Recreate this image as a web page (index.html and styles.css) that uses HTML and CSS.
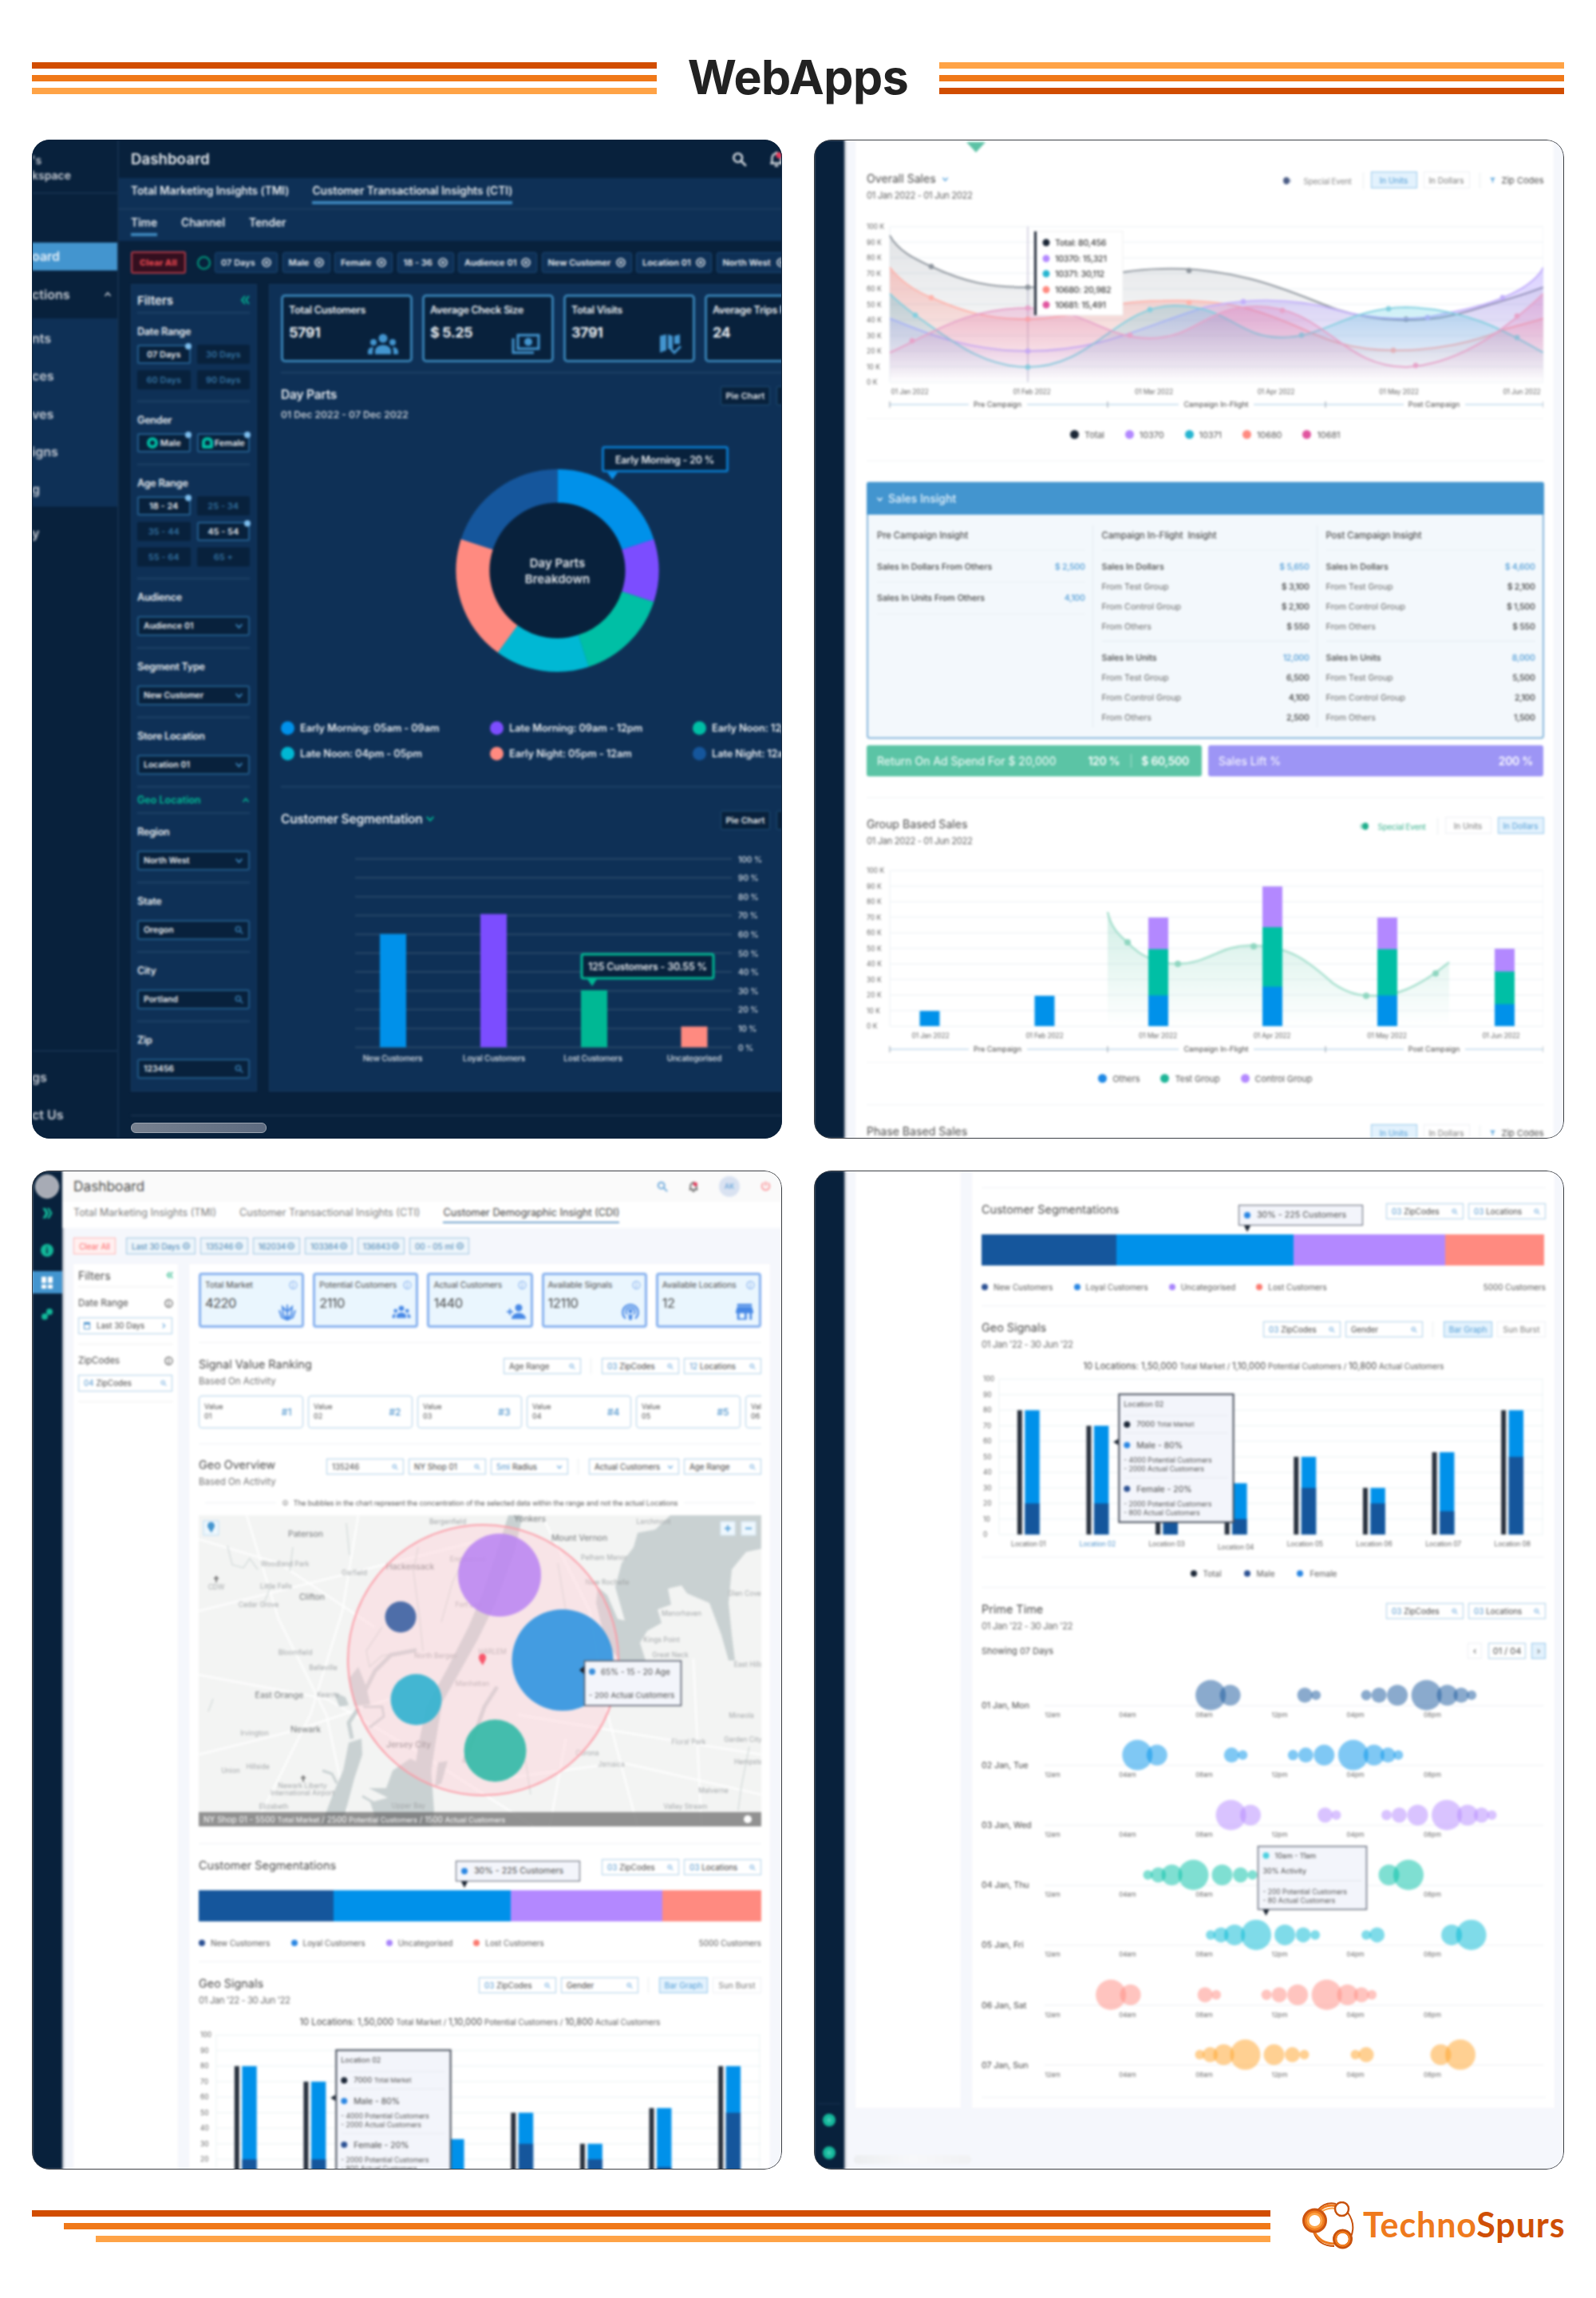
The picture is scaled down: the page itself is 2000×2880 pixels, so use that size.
FILE: index.html
```html
<!DOCTYPE html>
<html lang="en">
<head>
    <meta charset="UTF-8">
    <meta name="viewport" content="width=device-width, initial-scale=1.0">
    <title>WebApps - TechnoSpurs</title>
    <link rel="stylesheet" href="styles.css">
</head>
<body>
    <!-- icons -->
    <svg class="defs" width="0" height="0">
        <symbol id="i-search" viewBox="0 0 16 16"><circle cx="6.5" cy="6.5" r="4.5" fill="none" stroke="currentColor" stroke-width="2"/><path d="M10 10l5 5" stroke="currentColor" stroke-width="2"/></symbol>
        <symbol id="i-down" viewBox="0 0 10 10"><path d="M1.5 3L5 7l3.500-4" fill="none" stroke="currentColor" stroke-width="1.600"/></symbol>
        <symbol id="i-up" viewBox="0 0 10 10"><path d="M1.500 7L5 3l3.500 4" fill="none" stroke="currentColor" stroke-width="1.600"/></symbol>
        <symbol id="i-right" viewBox="0 0 10 10"><path d="M3.500 1.500L7 5l-3.500 3.500" fill="none" stroke="currentColor" stroke-width="1.400"/></symbol>
        <symbol id="i-dleft" viewBox="0 0 12 12"><path d="M6 1L2 6l4 5M11 1L7 6l4 5" fill="none" stroke="currentColor" stroke-width="2"/></symbol>
        <symbol id="i-dright" viewBox="0 0 16 16"><path d="M2 1h4l4 7-4 7H2l4-7zM8 1h3l4 7-4 7H8l4-7z" fill="currentColor"/></symbol>
        <symbol id="i-x" viewBox="0 0 12 12"><circle cx="6" cy="6" r="5" fill="none" stroke="currentColor" stroke-width="1.600"/><path d="M4 4l4 4M8 4l-4 4" stroke="currentColor" stroke-width="1.300"/></symbol>
        <symbol id="i-info" viewBox="0 0 12 12"><circle cx="6" cy="6" r="5" fill="none" stroke="currentColor" stroke-width="1.200"/><path d="M6 5v4M6 3v1" stroke="currentColor" stroke-width="1.200"/></symbol>
        <symbol id="i-bell" viewBox="0 0 16 18"><path d="M3 14V8a5 5 0 0 1 10 0v6zM1 14h14M8 1v2" fill="none" stroke="currentColor" stroke-width="2"/><path d="M6 16h4v2H6z" fill="currentColor"/><circle cx="11" cy="5" r="3.500" fill="#e5395a"/></symbol>
        <symbol id="i-power" viewBox="0 0 16 16"><path d="M5 3a6 6 0 1 0 6 0M8 1v7" fill="none" stroke="currentColor" stroke-width="1.800"/></symbol>
        <symbol id="i-group" viewBox="0 0 40 26"><circle cx="20" cy="6" r="5.500" fill="currentColor"/><circle cx="8" cy="11" r="4" fill="currentColor"/><circle cx="32" cy="11" r="4" fill="currentColor"/><path d="M10 26v-4c0-10 20-10 20 0v4zM1 26v-3c0-4 3-6 7-6-1 3-1 5-1 9zM39 26v-3c0-4-3-6-7-6 1 3 1 5 1 9z" fill="currentColor"/></symbol>
        <symbol id="i-cash" viewBox="0 0 36 26"><path d="M8 2h26v17H8zM2 6v18h26" fill="none" stroke="currentColor" stroke-width="3"/><circle cx="21" cy="10.500" r="5" fill="currentColor"/></symbol>
        <symbol id="i-map" viewBox="0 0 28 26"><path d="M1 3l8-2v20l-8 3zM11 1l6 2v18l-6-2zM19 3l7-2v12h-7z" fill="currentColor"/><path d="M15 20l4 4 8-8" stroke="currentColor" stroke-width="3" fill="none"/></symbol>
        <symbol id="i-lotus" viewBox="0 0 24 22"><path d="M12 2v18M6 5l1 10 5 5 5-5 1-10-6 6zM2 9l3 9 7 3 7-3 3-9" fill="none" stroke="currentColor" stroke-width="2"/></symbol>
        <symbol id="i-adduser" viewBox="0 0 24 20"><circle cx="15" cy="5" r="4.500" fill="currentColor"/><path d="M6 19c0-10 18-10 18 0zM0 9h8v2H0zM3 6h2v8H3z" fill="currentColor"/></symbol>
        <symbol id="i-signal" viewBox="0 0 26 26"><path d="M6 23a11.500 11.500 0 1 1 14 0M8 17a6.500 6.500 0 1 1 10 0" fill="none" stroke="currentColor" stroke-width="2.600"/><circle cx="13" cy="12" r="3" fill="currentColor"/><path d="M10 17h6l-1 8h-4z" fill="currentColor"/></symbol>
        <symbol id="i-store" viewBox="0 0 24 24"><path d="M2 1h20v3H2zM2 5h20l2 7v2H0v-2zM2 14h3v7h7v-7h3v9H2zM19 14h3v9h-3z" fill="currentColor"/></symbol>
        <symbol id="i-funnel" viewBox="0 0 10 10"><path d="M0 1h10L6 5.500V10H4V5.500z" fill="currentColor"/></symbol>
    </svg>

    <header class="page-head">
        <div class="lines"><i class="dark"></i><i class="mid"></i><i class="light"></i></div>
        <h1>WebApps</h1>
        <div class="lines"><i class="light"></i><i class="mid"></i><i class="dark"></i></div>
    </header>

    <main class="grid">
        <!-- 1: dark dashboard -->
        <section class="shot shot-dark">
            <div class="soft dk">
                <aside class="dk-side">
                    <div class="ws">'s<br>kspace</div>
                    <div class="dk-active">oard</div>
                    <div class="dk-group"><span>ctions</span><svg><use href="#i-up"/></svg></div>
                    <ul class="dk-sub"><li>nts</li><li>ces</li><li>ves</li><li>igns</li><li>g</li></ul>
                    <div class="dk-item">y</div>
                    <div class="dk-bottom"><div>gs</div><div>ct Us</div></div>
                </aside>
                <div class="dk-main">
                    <div class="dk-top"><h2>Dashboard</h2><svg class="ic-s"><use href="#i-search"/></svg><svg class="ic-b"><use href="#i-bell"/></svg></div>
                    <nav class="dk-tabs"><a>Total Marketing Insights (TMI)</a><a class="on">Customer Transactional Insights (CTI)</a></nav>
                    <nav class="dk-tabs sub"><a class="on">Time</a><a>Channel</a><a>Tender</a></nav>
                    <div class="dk-tags">
                        <b class="clear">Clear All</b><i class="ring"></i>
                        <span style="width:79px">07 Days<svg><use href="#i-x"/></svg></span>
                        <span style="width:60px">Male<svg><use href="#i-x"/></svg></span>
                        <span style="width:73px">Female<svg><use href="#i-x"/></svg></span>
                        <span style="width:71px">18 - 36<svg><use href="#i-x"/></svg></span>
                        <span style="width:99px">Audience 01<svg><use href="#i-x"/></svg></span>
                        <span style="width:113px">New Customer<svg><use href="#i-x"/></svg></span>
                        <span style="width:95px">Location 01<svg><use href="#i-x"/></svg></span>
                        <span style="width:95px">North West<svg><use href="#i-x"/></svg></span>
                    </div>
                    <div class="dk-body">
                        <div class="dk-filters">
                            <div class="f-head">Filters<svg><use href="#i-dleft"/></svg></div>
                            <div class="f-group"><label>Date Range</label>
                                <div class="btns"><b>07 Days</b><span>30 Days</span><span>60 Days</span><span>90 Days</span></div></div>
                            <div class="f-group"><label>Gender</label>
                                <div class="btns"><b><i class="gd"></i>Male</b><b><i class="gd sq"></i>Female</b></div></div>
                            <div class="f-group"><label>Age Range</label>
                                <div class="btns"><b>18 - 24</b><span>25 - 34</span><span>35 - 44</span><b>45 - 54</b><span>55 - 64</span><span>65 +</span></div></div>
                            <div class="f-group"><label>Audience</label><div class="inp">Audience 01<svg><use href="#i-down"/></svg></div></div>
                            <div class="f-group"><label>Segment Type</label><div class="inp">New Customer<svg><use href="#i-down"/></svg></div></div>
                            <div class="f-group"><label>Store Location</label><div class="inp">Location 01<svg><use href="#i-down"/></svg></div></div>
                            <div class="f-geo">Geo Location<svg><use href="#i-up"/></svg></div>
                            <div class="f-group"><label>Region</label><div class="inp">North West<svg><use href="#i-down"/></svg></div></div>
                            <div class="f-group"><label>State</label><div class="inp">Oregon<svg><use href="#i-search"/></svg></div></div>
                            <div class="f-group"><label>City</label><div class="inp">Portland<svg><use href="#i-search"/></svg></div></div>
                            <div class="f-group"><label>Zip</label><div class="inp">123456<svg><use href="#i-search"/></svg></div></div>
                        </div>
                        <div class="dk-panel">
                            <div class="dk-stats">
                                <div><h4>Total Customers</h4><b>5791</b><svg width="40" height="26"><use href="#i-group"/></svg></div>
                                <div><h4>Average Check Size</h4><b>$ 5.25</b><svg width="36" height="26"><use href="#i-cash"/></svg></div>
                                <div><h4>Total Visits</h4><b>3791</b><svg width="28" height="26"><use href="#i-map"/></svg></div>
                                <div><h4>Average Trips Per</h4><b>24</b></div>
                            </div>
                            <div class="dk-head"><div><h3>Day Parts</h3><p>01 Dec 2022 - 07 Dec 2022</p></div><span class="dk-btn">Pie Chart</span><span class="dk-btn next"></span></div>
                            <svg class="donut" width="640" height="325" viewBox="352 555 640 325">
                                <circle cx="698.500" cy="715" r="86" fill="#08213c"/>
                                <g id="donut" fill="none" stroke-width="42"></g>
                                <text class="dt" x="698.500" y="711">Day Parts</text>
                                <text class="dt" x="698.500" y="731">Breakdown</text>
                                <rect x="755.500" y="560.500" width="156" height="30" rx="2" fill="#08213c" stroke="#0a78c8" stroke-width="3"/>
                                <path d="M761 592h13l-6.500 9z" fill="#0a91ea"/>
                                <text class="tipt" x="833" y="581">Early Morning - 20 %</text>
                            </svg>
                            <div class="dk-legend">
                                <span><i style="background:#0091ea"></i>Early Morning: 05am - 09am</span>
                                <span><i style="background:#7c4dff"></i>Late Morning: 09am - 12pm</span>
                                <span><i style="background:#00bfa5"></i>Early Noon: 12pm - 04pm</span>
                                <span><i style="background:#00b8d4"></i>Late Noon: 04pm - 05pm</span>
                                <span><i style="background:#ff8a80"></i>Early Night: 05pm - 12am</span>
                                <span><i style="background:#15569c"></i>Late Night: 12am - 05am</span>
                            </div>
                            <div class="dk-head seg"><div><h3>Customer Segmentation <svg><use href="#i-down"/></svg></h3></div><span class="dk-btn">Pie Chart</span><span class="dk-btn next"></span></div>
                            <svg class="dkbars" width="640" height="290" viewBox="352 1060 640 290">
                                <g id="dk-axis"></g>
                                <rect x="476" y="1170.500" width="33" height="142" fill="#0091ea"/>
                                <rect x="602" y="1145.500" width="33" height="167" fill="#7c4dff"/>
                                <rect x="728" y="1241" width="33" height="71.500" fill="#00b894"/>
                                <rect x="853.500" y="1286.500" width="33" height="26" fill="#ff8a80"/>
                                <g class="ax mid"><text x="492" y="1330">New Customers</text><text x="619" y="1330">Loyal Customers</text><text x="743" y="1330">Lost Customers</text><text x="870" y="1330">Uncategorised</text></g>
                                <rect x="729" y="1196" width="165" height="30" rx="2" fill="#08213c" stroke="#00b894" stroke-width="3"/>
                                <path d="M736 1227h12l-6 9z" fill="#00b894"/>
                                <text class="tipt" x="811.500" y="1216">125 Customers - 30.55 %</text>
                            </svg>
                        </div>
                    </div>
                    <div class="dk-foot"></div>
                </div>
            </div>
            <i class="thumb"></i>
        </section>

        <!-- 2: sales -->
        <section class="shot">
            <div class="soft lt">
                <aside class="rail"></aside>
                <div class="card sales">
                    <i class="notch"></i>
                    <div class="sec first">
                        <div class="head"><div><h3>Overall Sales <svg><use href="#i-down"/></svg></h3><p>01 Jan 2022 - 01 Jun 2022</p></div>
                            <div class="tools"><span class="tog"><i></i>Special Event</span><span class="bt on">In Units</span><span class="bt">In Dollars</span><span class="zip"><svg><use href="#i-funnel"/></svg>Zip Codes</span></div></div>
                        <svg class="chart" width="848" height="268" viewBox="1086 256 848 268">
                            <defs>
                                <linearGradient id="gT" x1="0" y1="0" x2="0" y2="1"><stop offset="0" stop-color="#4a5565" stop-opacity=".16"/><stop offset="1" stop-color="#4a5565" stop-opacity="0"/></linearGradient>
                                <linearGradient id="gS" x1="0" y1="0" x2="0" y2="1"><stop offset="0" stop-color="#ff8a80" stop-opacity=".4"/><stop offset="1" stop-color="#ff8a80" stop-opacity="0"/></linearGradient>
                                <linearGradient id="gP" x1="0" y1="0" x2="0" y2="1"><stop offset="0" stop-color="#9f85ff" stop-opacity=".38"/><stop offset="1" stop-color="#9f85ff" stop-opacity="0"/></linearGradient>
                                <linearGradient id="gC" x1="0" y1="0" x2="0" y2="1"><stop offset="0" stop-color="#3fc3dd" stop-opacity=".3"/><stop offset="1" stop-color="#3fc3dd" stop-opacity="0"/></linearGradient>
                                <linearGradient id="gK" x1="0" y1="0" x2="0" y2="1"><stop offset="0" stop-color="#e060a8" stop-opacity=".3"/><stop offset="1" stop-color="#e060a8" stop-opacity="0"/></linearGradient>
                                <linearGradient id="gG" x1="0" y1="0" x2="0" y2="1"><stop offset="0" stop-color="#5bc4a5" stop-opacity=".28"/><stop offset="1" stop-color="#5bc4a5" stop-opacity="0"/></linearGradient>
                            </defs>
                            <g id="sales-axis"></g>
                            <g id="sales-lines"></g>
                            <rect x="1296" y="290" width="111" height="105" fill="#fff" stroke="#eee"/>
                            <path d="M1297.500 290v105" stroke="#222b3a" stroke-width="3"/>
                            <g class="lt-tip">
                                <circle cx="1311" cy="304" r="4.500" fill="#1b2636"/><text x="1322" y="308">Total: 80,456</text>
                                <circle cx="1311" cy="324" r="4.500" fill="#b388ff"/><text x="1322" y="328">10370: 15,321</text>
                                <circle cx="1311" cy="343" r="4.500" fill="#26b5d0"/><text x="1322" y="347">10371: 30,112</text>
                                <circle cx="1311" cy="363" r="4.500" fill="#ff8a80"/><text x="1322" y="367">10680: 20,982</text>
                                <circle cx="1311" cy="382" r="4.500" fill="#e0559f"/><text x="1322" y="386">10681: 15,491</text>
                            </g>
                        </svg>
                        <div class="legend wide"><span><i style="background:#1b2636"></i>Total</span><span><i style="background:#b388ff"></i>10370</span><span><i style="background:#26b5d0"></i>10371</span><span><i style="background:#ff8a80"></i>10680</span><span><i style="background:#e0559f"></i>10681</span></div>
                    </div>
                    <div class="insight">
                        <h4><svg><use href="#i-down"/></svg>Sales Insight</h4>
                        <div class="cols">
                            <div><h5>Pre Campaign Insight</h5>
                                <dl class="tot line"><dt>Sales In Dollars From Others</dt><dd>$ 2,500</dd></dl>
                                <dl class="tot line b"><dt>Sales In Units From Others</dt><dd>4,100</dd></dl></div>
                            <div><h5>Campaign In-Flight&nbsp; Insight</h5>
                                <dl class="tot"><dt>Sales In Dollars</dt><dd>$ 5,650</dd></dl><dl><dt>From Test Group</dt><dd>$ 3,100</dd></dl><dl><dt>From Control Group</dt><dd>$ 2,100</dd></dl><dl><dt>From Others</dt><dd>$ 550</dd></dl>
                                <hr>
                                <dl class="tot"><dt>Sales In Units</dt><dd>12,000</dd></dl><dl><dt>From Test Group</dt><dd>6,500</dd></dl><dl><dt>From Control Group</dt><dd>4,100</dd></dl><dl><dt>From Others</dt><dd>2,500</dd></dl></div>
                            <div><h5>Post Campaign Insight</h5>
                                <dl class="tot"><dt>Sales In Dollars</dt><dd>$ 4,600</dd></dl><dl><dt>From Test Group</dt><dd>$ 2,100</dd></dl><dl><dt>From Control Group</dt><dd>$ 1,500</dd></dl><dl><dt>From Others</dt><dd>$ 550</dd></dl>
                                <hr>
                                <dl class="tot"><dt>Sales In Units</dt><dd>8,000</dd></dl><dl><dt>From Test Group</dt><dd>5,500</dd></dl><dl><dt>From Control Group</dt><dd>2,100</dd></dl><dl><dt>From Others</dt><dd>1,500</dd></dl></div>
                        </div>
                    </div>
                    <div class="kpis"><div class="green"><span>Return On Ad Spend For $ 20,000</span><b>120 %</b><b class="r">$ 60,500</b></div><div class="violet"><span>Sales Lift %</span><b>200 %</b></div></div>
                    <div class="sec">
                        <div class="head"><div><h3>Group Based Sales</h3><p>01 Jan 2022 - 01 Jun 2022</p></div>
                            <div class="tools"><span class="tog green"><i></i>Special Event</span><span class="bt">In Units</span><span class="bt on">In Dollars</span></div></div>
                        <svg class="chart" width="848" height="267" viewBox="1086 1064 848 267">
                            <g id="group-axis"></g>
                            <path d="M1388 1143C1392 1162 1402 1172 1413 1181C1430 1200 1450 1208 1476 1208C1512 1208 1530 1185 1565 1185C1615 1184 1640 1205 1670 1232C1690 1246 1705 1248 1721 1248C1750 1249 1775 1236 1799 1219C1806 1214 1812 1209 1816 1206V1286H1388z" fill="url(#gG)"/>
                            <path d="M1388 1143C1392 1162 1402 1172 1413 1181C1430 1200 1450 1208 1476 1208C1512 1208 1530 1185 1565 1185C1615 1184 1640 1205 1670 1232C1690 1246 1705 1248 1721 1248C1750 1249 1775 1236 1799 1219C1806 1214 1812 1209 1816 1206" fill="none" stroke="#a5dfcd" stroke-width="2.500"/>
                            <g fill="#8fd6c0"><circle cx="1413" cy="1181" r="4"/><circle cx="1476" cy="1208" r="4"/><circle cx="1571" cy="1186" r="4"/><circle cx="1712" cy="1248" r="4"/><circle cx="1799" cy="1220" r="4"/></g>
                            <g id="group-bars"></g>
                        </svg>
                        <div class="legend wide"><span><i style="background:#1e88e5"></i>Others</span><span><i style="background:#1db597"></i>Test Group</span><span><i style="background:#b388ff"></i>Control Group</span></div>
                    </div>
                    <div class="sec last"><div class="head"><div><h3>Phase Based Sales</h3></div>
                        <div class="tools"><span class="bt on">In Units</span><span class="bt">In Dollars</span><span class="zip"><svg><use href="#i-funnel"/></svg>Zip Codes</span></div></div></div>
                </div>
            </div>
        </section>

        <!-- 3: demographic dashboard -->
        <section class="shot">
            <div class="soft lt">
                <aside class="rail full">
                    <i class="ava"></i>
                    <svg class="dbl"><use href="#i-dright"/></svg>
                    <i class="nfo">i</i>
                    <div class="cell"><i></i><i></i><i></i><i></i></div>
                    <svg class="lnk" viewBox="0 0 16 14"><circle cx="11" cy="4" r="2.500"/><circle cx="5" cy="10" r="2.500"/></svg>
                </aside>
                <div class="demo">
                    <div class="lt-top"><h2>Dashboard</h2><svg class="s"><use href="#i-search"/></svg><svg class="b"><use href="#i-bell"/></svg><em>AK</em><svg class="p"><use href="#i-power"/></svg></div>
                    <nav class="lt-tabs"><a>Total Marketing Insights (TMI)</a><a>Customer Transactional Insights (CTI)</a><a class="on">Customer Demographic Insight (CDI)</a></nav>
                    <div class="lt-tags"><b>Clear All</b>
                        <span style="width:87px">Last 30 Days<svg><use href="#i-x"/></svg></span><span>135246<svg><use href="#i-x"/></svg></span><span>162034<svg><use href="#i-x"/></svg></span><span>103384<svg><use href="#i-x"/></svg></span><span>136843<svg><use href="#i-x"/></svg></span><span style="width:75px">00 - 05 ml<svg><use href="#i-x"/></svg></span></div>
                    <div class="lt-body">
                        <div class="card lt-filters">
                            <div class="fh">Filters<svg><use href="#i-dleft"/></svg></div>
                            <div class="fg"><label>Date Range<svg><use href="#i-info"/></svg></label><div class="sel"><i class="cal"></i>Last 30 Days<svg><use href="#i-right"/></svg></div></div>
                            <div class="fg"><label>ZipCodes<svg><use href="#i-info"/></svg></label><div class="sel"><u>04</u> ZipCodes<svg><use href="#i-search"/></svg></div></div>
                        </div>
                        <div class="card lt-panel">
                            <div class="stats">
                                <div><h4>Total Market<svg><use href="#i-info"/></svg></h4><b>4220</b><svg class="big"><use href="#i-lotus"/></svg></div>
                                <div><h4>Potential Customers<svg><use href="#i-info"/></svg></h4><b>2110</b><svg class="big"><use href="#i-group"/></svg></div>
                                <div><h4>Actual Customers<svg><use href="#i-info"/></svg></h4><b>1440</b><svg class="big"><use href="#i-adduser"/></svg></div>
                                <div><h4>Available Signals<svg><use href="#i-info"/></svg></h4><b>12110</b><svg class="big"><use href="#i-signal"/></svg></div>
                                <div><h4>Available Locations<svg><use href="#i-info"/></svg></h4><b>12</b><svg class="big"><use href="#i-store"/></svg></div>
                            </div>
                            <div class="blk rank">
                                <div class="bh"><div><h3>Signal Value Ranking</h3><p>Based On Activity</p></div>
                                    <div class="tl"><div class="sel">Age Range<svg><use href="#i-search"/></svg></div><s></s><div class="sel"><u>03</u> ZipCodes<svg><use href="#i-search"/></svg></div><div class="sel"><u>12</u> Locations<svg><use href="#i-search"/></svg></div></div></div>
                                <div class="vals"><div>Value<br>01<b>#1</b></div><div>Value<br>02<b>#2</b></div><div>Value<br>03<b>#3</b></div><div>Value<br>04<b>#4</b></div><div>Value<br>05<b>#5</b></div><div>Value<br>06<b>#6</b></div></div>
                            </div>
                            <div class="blk geo">
                                <div class="bh"><div><h3>Geo Overview</h3><p>Based On Activity</p></div>
                                    <div class="tl"><div class="sel">135246<svg><use href="#i-search"/></svg></div><div class="sel">NY Shop 01<svg><use href="#i-search"/></svg></div><div class="sel"><u>5mi</u> Radius<svg><use href="#i-down"/></svg></div><s></s><div class="sel w">Actual Customers<svg><use href="#i-down"/></svg></div><div class="sel">Age Range<svg><use href="#i-search"/></svg></div></div></div>
                                <div class="note"><svg><use href="#i-info"/></svg>The bubbles in the chart represent the concentration of the selected data within the range and not the actual Locations</div>
                                <svg class="map" width="705" height="390" viewBox="0 0 705 390">
                                    <rect width="705" height="390" fill="#f3f4f3"/>
                                    <g fill="none" stroke="#fff" stroke-width="2"><path d="M0 120L120 90 240 60 400 20M0 200l160 30 120 70 140 90M60 0l40 130 60 120 30 140M200 0l-20 120-40 130-70 140M430 0l60 120 20 120 40 150M400 250l180 30 125 20M380 330l150-20 175 40M620 180l10 210M0 300l120-30 120-40M0 30l100 30 120 80M460 280l-20 110"/></g>
                                    <g fill="none" stroke="#d5dcdb" stroke-width="1.500"><path d="M36 38l6 24 14 4 8-12 10 14M118 40l-4 30M90 90l-8 20M275 40l-6 30 8 60 4 40M340 40l-22 44-14 50M230 140l-20 30 4 20 16-14 40-6M18 230l-6 16M690 290l-10 50 -4 30M400 280l10 30 6 40M450 60l10 60M185 10l4 40"/></g>
                                    <g fill="#c9d1d2">
                                        <path d="M591 0H705V42L686 46 668 68 664 110 668 150 672 182 664 182 655 150 640 110 612 98 605 88 588 92 592 112 575 118 580 135 562 145 553 160 560 182 528 182 510 160 498 110 500 90 512 100 525 130 534 132 522 90 530 60 545 40 550 22 572 18z"/>
                                        <path d="M388 0h18l-10 45-24 65-22 45-25 45-20 35-9 55-6 40-22 10 7-50 10-50 25-45 28-55 17-40 17-50z"/>
                                        <path d="M265 305l26 12 4 53-4 20h-66l-10-30 22-6-24-12 22 0 8-22z"/>
                                        <path d="M188 285l16-5 1 20-10 30-12 45-30 15 15-40 13-30z"/>
                                        <path d="M188 205l12-15 10 25 5 22-20 2zM300 310l12-2-8 28-8 4z"/>
                                        <path d="M170 222l14 6 4 10-12 2z"/>
                                    </g>
                                    <g fill="none" stroke="#c9d1d2"><path stroke-width="5" d="M206 225l15-30 20-20 32-6M192 280l-4-20 12-18M374 215l-16 25-14 40-12 30"/><path stroke-width="3" d="M206 240l24 0 2 12-18 14M155 320l12 4 6 12M205 352l24 14"/></g>
                                    <g class="m1"><text x="134" y="27">Paterson</text><text x="265" y="68">Hackensack</text><text x="477" y="32">Mount Vernon</text><text x="415" y="8">Yonkers</text><text x="134" y="272">Newark</text><text x="142" y="106">Clifton</text><text x="101" y="229">East Orange</text><text x="263" y="291">Jersey City</text></g>
                                    <g class="m2"><text x="312" y="11">Bergenfield</text><text x="570" y="11">Larchmont</text><text x="508" y="56">Pelham Manor</text><text x="108" y="64">Woodland Park</text><text x="195" y="75">Garfield</text><text x="337" y="58">Englewood</text><text x="97" y="92">Little Falls</text><text x="75" y="115">Cedar Grove</text><text x="22" y="93">CDW</text><text x="338" y="115">Fort Lee</text><text x="512" y="87">New Rochelle</text><text x="121" y="175">Bloomfield</text><text x="156" y="194">Belleville</text><text x="297" y="179">North Bergen</text><text x="368" y="174">HARLEM</text><text x="343" y="214">Manhattan</text><text x="162" y="228">Kearny</text><text x="70" y="276">Irvington</text><text x="40" y="323">Union</text><text x="74" y="318">Hillside</text><text x="130" y="342">Newark Liberty</text><text x="130" y="351">International Airport</text><text x="94" y="368">Elizabeth</text><text x="263" y="367">Upper Bay</text><text x="605" y="126">Manorhaven</text><text x="580" y="159">Kings Point</text><text x="591" y="178">Great Neck</text><text x="684" y="101">Glen Cove</text><text x="689" y="190">East Hills</text><text x="680" y="254">Mineola</text><text x="614" y="287">Floral Park</text><text x="682" y="284">Garden City</text><text x="694" y="312">Hempstead</text><text x="645" y="348">Malverne</text><text x="610" y="368">Valley Stream</text><text x="487" y="301">Corona</text><text x="517" y="315">Jamaica</text></g>
                                    <path d="M22 76v8M19 79h6M131 326v8M128 329h6" stroke="#777" stroke-width="2"/>
                                    <circle cx="356.500" cy="181.500" r="169.500" fill="#ffccd5" fill-opacity=".4" stroke="#fb9aa5" stroke-width="2"/>
                                    <circle cx="377" cy="75" r="52" fill="#b882f2" fill-opacity=".85"/>
                                    <circle cx="253" cy="127.500" r="19.500" fill="#4467a5" fill-opacity=".95"/>
                                    <circle cx="456" cy="181.500" r="63.500" fill="#3597e0" fill-opacity=".93"/>
                                    <circle cx="272.500" cy="231" r="32" fill="#35b3d0" fill-opacity=".93"/>
                                    <circle cx="371.500" cy="295" r="39" fill="#36baa8" fill-opacity=".93"/>
                                    <path d="M356 188c-4-6-5-7-5-10a4.500 4.500 0 0 1 9 0c0 3-1 4-4 10z" fill="#f8566b"/>
                                    <rect x="6" y="7" width="19" height="18" fill="#eef7fd" stroke="#bcdcf2"/><path d="M16 22c-4-6-5-7-5-9a4.500 4.500 0 0 1 9 0c0 2-1 3-4 9z" fill="#4395cf"/>
                                    <rect x="654" y="8" width="18" height="17" fill="#eef7fd" stroke="#d6e9f7"/><rect x="680" y="8" width="18" height="17" fill="#eef7fd" stroke="#d6e9f7"/><path d="M659 16.500h8M663 12.500v8M685 16.500h8" stroke="#5ba3dc" stroke-width="2"/>
                                    <rect y="372" width="705" height="18" fill="#666" fill-opacity=".7"/>
                                    <text class="cap" x="6" y="385">NY Shop 01 - 5500 <tspan>Total Market</tspan> / 2500 <tspan>Potential Customers</tspan> / 1500 <tspan>Actual Customers</tspan></text>
                                    <circle cx="688" cy="381" r="5" fill="#fff"/>
                                    <path d="M477 194l6-5v10z" fill="#17202e"/>
                                    <rect x="483.500" y="182.500" width="121" height="56" fill="#f3f5fb" stroke="#4d5566" stroke-width="1.500"/>
                                    <circle cx="493" cy="196" r="4" fill="#3a8fdc"/>
                                    <text class="tp" x="504" y="200">65% - 15 - 20 Age</text><text class="tp s" x="489" y="229">- 200 Actual Customers</text>
                                </svg>
                            </div>
                            <div class="insights"></div>
                        </div>
                    </div>
                </div>
            </div>
        </section>

        <!-- 4: demographic dashboard, scrolled down -->
        <section class="shot">
            <div class="soft lt scrolled">
                <aside class="rail"><div class="rail-end"><i></i><i></i></div></aside>
                <div class="demo">
                    <div class="lt-body">
                        <div class="card lt-filters"></div>
                        <div class="card lt-panel">
                            <div class="insights"></div>
                            <div class="blk prime">
                                <div class="bh"><div><h3>Prime Time</h3><p class="date">01 Jan '22 - 30 Jan '22</p></div>
                                    <div class="tl"><div class="sel"><u>03</u> ZipCodes<svg><use href="#i-search"/></svg></div><div class="sel"><u>03</u> Locations<svg><use href="#i-search"/></svg></div></div></div>
                                <div class="showing">Showing 07 Days<span class="off">&lsaquo;</span><span class="pg">01 / 04</span><span class="nx">&rsaquo;</span></div>
                                <svg id="prime" width="705" height="544" viewBox="1229.500 2085 705 544"></svg>
                            </div>
                        </div>
                    </div>
                    <div class="foot"><i></i></div>
                </div>
            </div>
        </section>
    </main>

    <footer class="page-foot">
        <div class="lines"><i class="dark"></i><i class="mid"></i><i class="light"></i></div>
        <div class="logo">
            <svg width="66" height="62" viewBox="0 0 66 62">
                <path d="M19 11C26 3 34 1 42 3M14 38C18 50 26 56 40 56M57 14C64 24 65 34 61 44" fill="none" stroke="#c8520d" stroke-width="2"/>
                <path d="M20 13C27 5 36 4 43 6M15 38C20 48 28 53 40 53" fill="none" stroke="#f07c1e" stroke-width="3"/>
                <path d="M22 15C28 9 36 8 42 9" fill="none" stroke="#fda447" stroke-width="2"/>
                <circle cx="15.500" cy="24" r="14" fill="#f07c1e" stroke="#cc5410" stroke-width="3"/>
                <circle cx="15.500" cy="24" r="8.500" fill="#fff" stroke="#fda447" stroke-width="3"/>
                <circle cx="49.500" cy="9.500" r="8.500" fill="#fff" stroke="#c8520d" stroke-width="2.500"/>
                <circle cx="50.500" cy="47" r="10" fill="#fff" stroke="#c8520d" stroke-width="5"/>
                <circle cx="50.500" cy="47" r="8.500" fill="none" stroke="#f07c1e" stroke-width="2.500"/>
            </svg>
            <b><span>Techno</span>Spurs</b>
        </div>
    </footer>

    <!-- shared by both demographic screens -->
    <template id="tpl-insights">
        <div class="blk segm">
            <div class="bh"><div><h3>Customer Segmentations</h3></div>
                <div class="tl"><div class="sel"><u>03</u> ZipCodes<svg><use href="#i-search"/></svg></div><div class="sel"><u>03</u> Locations<svg><use href="#i-search"/></svg></div></div></div>
            <div class="stip"><i></i>30% - 225 Customers</div>
            <div class="sbar"><i></i><i></i><i></i><i></i></div>
            <div class="slegend"><span><i style="background:#2c5193"></i>New Customers</span><span><i style="background:#2a86e2"></i>Loyal Customers</span><span><i style="background:#a884fb"></i>Uncategorised</span><span><i style="background:#fb7a70"></i>Lost Customers</span><em>5000 Customers</em></div>
        </div>
        <div class="blk signals">
            <div class="bh"><div><h3>Geo Signals</h3><p class="date">01 Jan '22 - 30 Jun '22</p></div>
                <div class="tl"><div class="sel"><u>03</u> ZipCodes<svg><use href="#i-search"/></svg></div><div class="sel">Gender<svg><use href="#i-search"/></svg></div><s></s><span class="bt on">Bar Graph</span><span class="bt">Sun Burst</span></div></div>
            <div class="scap"><b>10 Locations: 1,50,000</b> Total Market / <b>1,10,000</b> Potential Customers / <b>10,800</b> Actual Customers</div>
            <svg class="locs" width="705" height="230" viewBox="1229.500 1722.500 705 230"></svg>
            <div class="legend"><span><i style="background:#1b2636"></i>Total</span><span><i style="background:#2c5193"></i>Male</span><span><i style="background:#2a86e2"></i>Female</span></div>
        </div>
    </template>
    <script src="charts.js"></script>
</body>
</html>
```
FILE: styles.css
```css
* {
    box-sizing: border-box;
}
body {
    margin: 0;
    width: 2000px;
    height: 2880px;
    padding: 0 40px;
    background: #fff;
    font-family: Inter, "Open Sans", sans-serif;
    color: #4a4a4a;
}
h1, h2, h3, h4, h5, p, ul, dl, dd {
    margin: 0;
    padding: 0;
    font-weight: inherit;
}
ul {
    list-style: none;
}
i, em {
    font-style: normal;
}
u, s {
    text-decoration: none;
}
.defs {
    position: absolute;
}
svg {
    flex: none;
}

/* page header and footer */
.page-head {
    display: flex;
    align-items: center;
    justify-content: space-between;
    height: 196px;
    margin-bottom: -21px;
}
.lines {
    display: flex;
    flex-direction: column;
    gap: 8px;
    width: 783px;
}
.lines i {
    height: 8px;
}
.dark {
    background: #d14d00;
}
.mid {
    background: #f07818;
}
.light {
    background: #ffa346;
}
h1 {
    font: 650 59px/1 Inter, sans-serif;
    letter-spacing: -0.5px;
    color: #222;
}
.page-head h1 {
    padding-bottom: 3px;
}
.grid {
    display: grid;
    grid-template-columns: 940px 940px;
    grid-template-rows: 1252px 1252px;
    gap: 40px;
}
.page-foot {
    display: flex;
    justify-content: space-between;
    padding-top: 40px;
}
.page-foot .lines {
    width: 1552px;
    padding-top: 11px;
}
.page-foot .mid {
    margin-left: 40px;
}
.page-foot .light {
    margin-left: 80px;
}
.logo {
    display: flex;
    align-items: center;
    width: 328px;
    height: 62px;
}
.logo b {
    margin: -6px 0 0 10px;
    font: 700 43px/1 Lato, sans-serif;
    letter-spacing: 0.9px;
    white-space: nowrap;
    color: #cf4f06;
}
.logo span {
    color: #ef7a1d;
}

/* screen frames */
.shot {
    position: relative;
    overflow: hidden;
    border-radius: 22px;
    background: #fff;
}
.shot::after {
    content: "";
    position: absolute;
    inset: 0;
    border: 1px solid #3c3f44;
    border-radius: 22px;
}
.shot-dark {
    background: #08213c;
}
.shot-dark::after {
    border-color: #10263f;
}
.soft {
    display: flex;
    height: 1252px;
    filter: blur(1.4px);
}
.thumb {
    position: absolute;
    left: 124px;
    top: 1232px;
    width: 170px;
    height: 13px;
    border: 1px solid #9aa3af;
    border-radius: 6px;
    background: linear-gradient(90deg, #76808f, #5d6b80);
}

/* dark dashboard */
.dk {
    color: #e6eaee;
    font-weight: 600;
    white-space: nowrap;
}
.dk-side {
    flex: none;
    width: 109px;
    border-right: 2px solid #14304e;
    font-size: 15px;
    display: flex;
    flex-direction: column;
    color: #c9ced6;
}
.ws {
    height: 68px;
    padding-top: 16px;
    font-size: 14px;
    line-height: 19px;
    border-bottom: 2px solid #14304e;
}
.dk-active {
    height: 35px;
    margin-top: 61px;
    background: #4395cf;
    line-height: 35px;
    font-size: 16px;
    color: #e8f1f9;
}
.dk-group {
    display: flex;
    justify-content: space-between;
    align-items: center;
    height: 60px;
    padding-right: 7px;
    font-size: 16px;
}
.dk-group svg {
    width: 10px;
    height: 10px;
}
.dk-sub {
    height: 236px;
    background: #0e3056;
    font-size: 16px;
}
.dk-sub li {
    height: 47.300px;
    line-height: 50px;
}
.dk-item {
    line-height: 66px;
    font-size: 16px;
}
.dk-bottom {
    margin-top: auto;
    height: 111px;
    border-top: 2px solid #14304e;
    padding-top: 9px;
    font-size: 16px;
    line-height: 47px;
}
.dk-main {
    flex: 1;
    min-width: 0;
}
.dk-top {
    display: flex;
    align-items: center;
    height: 48px;
    padding-left: 15px;
}
.dk-top h2 {
    font-size: 18.700px;
}
.ic-s {
    width: 19px;
    height: 19px;
    margin-left: auto;
}
.ic-b {
    width: 18px;
    height: 20px;
    margin: 0 -2px 0 28px;
}
.dk-tabs {
    display: flex;
    gap: 29px;
    height: 38px;
    padding: 5px 0 0 15px;
    background: #0e3056;
    font-size: 13.800px;
    letter-spacing: -0.05px;
}
.dk-tabs a {
    height: 28px;
    line-height: 23px;
}
.dk-tabs .on {
    border-bottom: 4px solid #3c86bc;
}
.dk-tabs.sub {
    height: 41px;
    border-top: 2px solid #1b3b5f;
    gap: 30px;
}
.dk-tags {
    display: flex;
    gap: 5.500px;
    align-items: center;
    height: 54px;
    padding-left: 15px;
    font-size: 11px;
}
.dk-tags span, .dk-tags .clear {
    display: flex;
    flex: none;
    align-items: center;
    justify-content: space-between;
    height: 26px;
    padding: 0 7px;
    border: 1px solid #1d4a78;
    border-radius: 3px;
    background: #0e3056;
}
.dk-tags svg {
    width: 12px;
    height: 12px;
}
.dk-tags .clear {
    width: 69px;
    height: 28px;
    justify-content: center;
    border: 2px solid #b23a48;
    background: #330f1f;
    color: #d8404a;
    padding: 0;
}
.ring {
    flex: none;
    width: 17px;
    height: 17px;
    margin: 0 0 0 8px;
    border: 2px solid #00a080;
    border-radius: 50%;
}
.dk-body {
    display: flex;
    gap: 15px;
    height: 1012px;
    padding-left: 15px;
}
.dk-filters {
    flex: none;
    width: 158px;
    padding: 0 8px 0 7px;
    background: #0e3056;
    border: 1px solid #17395f;
}
.f-head {
    display: flex;
    align-items: center;
    justify-content: space-between;
    height: 34px;
    padding-top: 4px;
    font-size: 15px;
    font-weight: 600;
}
.f-head svg {
    width: 12px;
    height: 14px;
    color: #00b894;
}
.f-group {
    border-top: 2px solid #1d4166;
    padding: 13px 0 14px;
    font-size: 12px;
}
.f-group label {
    display: block;
    line-height: 20px;
    font-size: 12.500px;
    font-weight: 600;
    letter-spacing: -0.2px;
}
.btns {
    display: grid;
    grid-template-columns: 1fr 1fr;
    gap: 8px;
    margin-top: 6px;
    font-size: 11px;
}
.btns > * {
    position: relative;
    display: flex;
    align-items: center;
    justify-content: center;
    height: 24px;
    background: #08213c;
    color: #33709f;
    font-weight: 600;
    border-radius: 2px;
}
.btns b {
    border: 2px solid #245f8f;
    color: #e3e6ea;
}
.btns b::after {
    content: "";
    position: absolute;
    right: -3px;
    top: -4px;
    width: 8px;
    height: 8px;
    border-radius: 50%;
    background: #7dbdec;
}
.gd {
    flex: none;
    width: 14px;
    height: 14px;
    margin-right: 3px;
    border: 4px solid #00bfa5;
    border-radius: 50%;
}
.sq {
    border-radius: 6px 6px 2px 2px;
    margin-right: 2px;
}
.inp {
    display: flex;
    align-items: center;
    justify-content: space-between;
    height: 25px;
    margin-top: 13px;
    padding: 0 6px;
    border: 2px solid #215a88;
    border-radius: 3px;
    background: #08213c;
    font-size: 10.500px;
}
.inp svg {
    width: 11px;
    height: 11px;
    color: #3c86bc;
}
.f-geo {
    display: flex;
    align-items: center;
    justify-content: space-between;
    height: 33px;
    border-top: 2px solid #1d4166;
    color: #00b894;
    font-size: 12.500px;
}
.f-geo svg {
    width: 10px;
    height: 10px;
}
.dk-panel {
    flex: none;
    width: 700px;
    padding: 12px 0 0 14px;
    background: #0e3056;
    border: 1px solid #17395f;
}
.dk-stats {
    display: flex;
    gap: 12px;
    height: 97px;
}
.dk-stats > div {
    position: relative;
    flex: none;
    width: 165px;
    height: 85px;
    padding: 7px 7px;
    border: 3px solid #3781b4;
    border-radius: 5px;
    background: #08213c;
}
.dk-stats h4 {
    font-size: 12.700px;
    line-height: 20px;
    letter-spacing: -0.3px;
}
.dk-stats b {
    display: block;
    margin-top: 6px;
    font-size: 18px;
    line-height: 24px;
    font-weight: 700;
    letter-spacing: -0.5px;
}
.dk-stats svg {
    position: absolute;
    right: 14px;
    bottom: 7px;
    color: #4395cf;
}
.dk-head {
    display: flex;
    gap: 8px;
    height: 89px;
    padding-top: 16px;
    border-top: 2px solid #1d4166;
}
.dk-head > div {
    width: 545px;
}
.dk-head h3 {
    font-size: 15.500px;
    font-weight: 600;
    letter-spacing: -0.2px;
    line-height: 22px;
}
.dk-head p {
    padding-top: 4px;
    font-size: 12.200px;
    font-weight: 600;
    line-height: 20px;
    color: #c5ccd4;
}
.dk-btn {
    width: 63px;
    height: 24px;
    border: 1px solid #1f5078;
    border-radius: 2px;
    background: #08213c;
    font-size: 11px;
    line-height: 22px;
    text-align: center;
}
.donut, .dkbars {
    display: block;
}
.dt {
    font-size: 15px;
    fill: #dfe3e8;
    text-anchor: middle;
}
.tipt {
    font-size: 12.500px;
    fill: #e6e9ed;
    text-anchor: middle;
    letter-spacing: -0.2px;
}
.dk-legend {
    display: grid;
    grid-template-columns: 262px 254px 254px;
    row-gap: 12px;
    height: 105px;
    padding-top: 22px;
    align-content: start;
    font-size: 12.800px;
    letter-spacing: -0.1px;
}
.dk-legend span {
    display: flex;
    align-items: center;
    height: 20px;
}
.dk-legend i {
    width: 17px;
    height: 17px;
    margin-right: 7px;
    border-radius: 50%;
}
.dk-head.seg {
    height: 75px;
    padding-top: 29px;
}
.seg svg {
    width: 12px;
    height: 12px;
    color: #00b894;
}
.ax {
    font-size: 10px;
    fill: #c9d1da;
}
.ax.mid {
    text-anchor: middle;
    letter-spacing: -0.2px;
}
.dk-foot {
    margin: 29px 0 0 15px;
    border-top: 2px solid #17304c;
}

/* light screens */
.lt {
    background: #f5f7fc;
    white-space: nowrap;
}
.rail {
    flex: none;
    width: 38px;
    background: #08213c;
    box-shadow: 1px 0 3px #8d93a0;
    display: flex;
    flex-direction: column;
    align-items: center;
}
.card {
    background: #fff;
    box-shadow: 0 0 2px #eceef4;
}
.sales {
    position: relative;
    width: 875px;
    margin-left: 13.500px;
    padding: 16px 12px 0 14.500px;
}
.notch {
    position: absolute;
    left: 139px;
    top: 3px;
    border: 12px solid transparent;
    border-top: 13px solid #5bc2a5;
    border-bottom: 0;
}
.sec {
    height: 385px;
    border-top: 1px solid #f0f2f5;
}
.sec.first {
    height: 387px;
    border: 0;
    border-bottom: 1px solid #f0f2f5;
}
.head {
    display: flex;
    justify-content: space-between;
    height: 64px;
    padding-top: 23px;
}
.first .head {
    height: 65px;
}
.head h3 {
    font-size: 14.100px;
    line-height: 20px;
}
.head h3 svg {
    width: 9px;
    height: 9px;
    margin-left: 3px;
    color: #5aa5dd;
}
.head p {
    padding-top: 1px;
    font-size: 11.300px;
    letter-spacing: -0.4px;
    line-height: 20px;
    color: #666;
}
.tools {
    display: flex;
    align-items: flex-start;
    gap: 8px;
    font-size: 10px;
    line-height: 20px;
}
.bt {
    width: 58px;
    height: 21px;
    border: 1px solid #eceff2;
    text-align: center;
    font-size: 10px;
    line-height: 20px;
    color: #777;
    margin-top: 1px;
}
.bt.on {
    border-color: #90c3e8;
    background: #e3f2fd;
    color: #4f9bd5;
}
.tog {
    display: flex;
    align-items: center;
    height: 21px;
    margin-top: 2px;
    padding-right: 14px;
    margin-right: 1px;
    border-right: 1px solid #e8ebee;
    color: #888;
    letter-spacing: -0.3px;
}
.tog i {
    width: 8px;
    height: 9px;
    margin-right: 18px;
    border-radius: 50%;
    background: #4b5c85;
    box-shadow: 4px 0 0 -2px #c3cbdd;
}
.tog.green {
    color: #3cb28f;
}
.green.tog i {
    margin-right: 12px;
    background: #1fae8c;
    box-shadow: -4px 0 0 -1px #b6e3d6;
}
.zip {
    margin: 2px 0 0 4px;
    padding-left: 12px;
    border-left: 1px solid #e8ebee;
    font-size: 11px;
}
.zip svg {
    width: 7px;
    height: 9px;
    margin-right: 8px;
    color: #5aa5dd;
}
.chart {
    display: block;
    border-bottom: 1px solid #f3f5f7;
    box-sizing: content-box;
}
.lax {
    font-size: 8.500px;
    fill: #666;
}
.lax .c {
    text-anchor: middle;
    letter-spacing: -0.2px;
}
.ph {
    font-size: 9px;
    fill: #444;
    text-anchor: middle;
}
.lt-tip {
    font-size: 10.700px;
    fill: #3c3c3c;
    letter-spacing: -0.3px;
    font-weight: 500;
}
.legend {
    display: flex;
    align-items: center;
    justify-content: center;
    gap: 28px;
    height: 39px;
    font-size: 10px;
    color: #555;
}
.legend span {
    display: flex;
    align-items: center;
}
.legend i {
    width: 8px;
    height: 8px;
    margin-right: 8px;
    border-radius: 50%;
}
.wide i {
    width: 11px;
    height: 11px;
    margin-right: 7px;
}
.wide {
    gap: 26px;
    font-size: 11px;
    letter-spacing: -0.1px;
}
.insight {
    height: 322px;
    margin-top: 26px;
    border: 2px solid #83b4da;
    border-radius: 4px;
    background: #f3f8fc;
}
.insight h4 {
    height: 41px;
    margin: -2px -2px 0;
    padding-left: 12px;
    border-radius: 3px 3px 0 0;
    background: #4395cf;
    color: #e9f4fc;
    font-size: 14px;
    font-weight: 500;
    line-height: 41px;
}
.insight h4 svg {
    width: 9px;
    height: 9px;
    margin-right: 6px;
}
.cols {
    display: grid;
    grid-template-columns: 281.500px 281px 1fr;
    padding-top: 13px;
    font-size: 10.700px;
}
.cols > div {
    height: 254px;
    padding: 0 9px 0 11px;
    border-right: 1px solid #e3eaf0;
}
.cols > div:last-child {
    border: 0;
}
.cols h5 {
    height: 32px;
    margin-bottom: 8px;
    border-bottom: 1px solid #e9eff4;
    font-size: 11.200px;
    font-weight: 500;
    line-height: 26px;
}
.cols dl {
    display: flex;
    justify-content: space-between;
    height: 25px;
    line-height: 25px;
    color: #666;
}
.cols dd {
    font-weight: 500;
    color: #3c3c3c;
    letter-spacing: -0.3px;
}
.cols .tot {
    font-weight: 500;
    color: #3c3c3c;
}
.cols .tot dd {
    color: #4f9bd5;
}
.cols .line {
    height: 32px;
    border-bottom: 1px solid #e9eff4;
}
.cols .b {
    height: 40px;
    padding-top: 7px;
}
.cols hr {
    margin: 5px 0 8px;
    border: 0;
    border-top: 1px solid #e3eaf0;
}
.kpis {
    display: flex;
    gap: 8px;
    margin: 8px 0 26px;
}
.kpis div {
    display: flex;
    align-items: center;
    width: 420px;
    height: 39px;
    padding: 0 13px;
    border-radius: 3px;
    color: #fff;
    font-size: 14px;
}
.kpis span {
    flex: 1;
}
.kpis .green {
    background: #5bc4a5;
    padding-right: 16px;
}
.kpis .violet {
    background: #9d95f5;
}
.kpis b {
    font-weight: 600;
    letter-spacing: -0.3px;
}
.kpis .r {
    margin-left: 14px;
    padding-left: 12px;
    border-left: 1px solid #a9e0cf;
}
.last {
    height: 42px;
    overflow: hidden;
}

/* demographic dashboard */
.ava {
    flex: none;
    width: 30px;
    height: 30px;
    margin-top: 5px;
    border: 1px solid #ddd;
    border-radius: 50%;
    background: #a7abb5;
}
.dbl {
    width: 16px;
    height: 15px;
    margin-top: 11px;
    color: #12b99a;
}
.nfo {
    width: 16px;
    height: 16px;
    margin-top: 31px;
    border-radius: 50%;
    background: #12b99a;
    color: #08213c;
    font: 700 11px/16px Inter;
    text-align: center;
}
.cell {
    display: grid;
    grid-template-columns: 6px 6px;
    grid-template-rows: 8px 5px;
    gap: 2px;
    place-content: center;
    width: 38px;
    height: 28px;
    margin-top: 18px;
    background: #4395cf;
}
.cell i {
    background: #fff;
}
.lnk {
    width: 18px;
    height: 14px;
    margin-top: 19px;
    fill: #12b99a;
    stroke: #12b99a;
    stroke-width: 3;
}
.demo {
    flex: 1;
    min-width: 0;
    display: flex;
    flex-direction: column;
}
.lt-top {
    display: flex;
    flex: none;
    align-items: center;
    height: 39px;
    padding: 0 14px;
    background: #fafafa;
}
.lt-top h2 {
    flex: 1;
    font-size: 17.300px;
}
.lt-top .s {
    width: 14px;
    height: 14px;
    color: #5b9fd8;
}
.lt-top .b {
    width: 12px;
    height: 14px;
    margin: 0 26px;
}
.lt-top em {
    width: 26px;
    height: 26px;
    border-radius: 50%;
    background: #d9e2f1;
    color: #5b9fd8;
    font-size: 9px;
    line-height: 26px;
    text-align: center;
}
.lt-top .p {
    width: 13px;
    height: 13px;
    margin-left: 26px;
    color: #fb7f85;
}
.lt-tabs {
    display: flex;
    flex: none;
    gap: 29px;
    height: 33px;
    padding: 3px 14px;
    background: #fff;
    font-size: 12.700px;
    color: #7c7c7c;
}
.lt-tabs a {
    height: 24px;
    line-height: 21px;
}
.lt-tabs .on {
    border-bottom: 2px solid #6f9fca;
    color: #3c3c3c;
}
.lt-tags {
    display: flex;
    flex: none;
    align-items: center;
    gap: 6px;
    height: 45px;
    padding: 0 0 0 14px;
    font-size: 10px;
    letter-spacing: -0.1px;
    color: #4583b2;
}
.lt-tags b, .lt-tags span {
    display: flex;
    flex: none;
    align-items: center;
    justify-content: space-between;
    width: 59.500px;
    height: 21px;
    padding: 0 6px;
    border: 1px solid #9cc2de;
    background: #edf5fb;
}
.lt-tags svg {
    width: 9px;
    height: 9px;
}
.lt-tags b {
    width: 53px;
    margin-right: 7px;
    border-color: #ffb3b3;
    background: #fff0f0;
    color: #ff6b6b;
    font-weight: 400;
    justify-content: center;
}
.lt-body {
    display: flex;
    gap: 14px;
    padding-left: 14px;
    height: 1300px;
}
.lt-filters {
    flex: none;
    width: 131px;
    padding: 0 6px;
}
.fh {
    display: flex;
    align-items: center;
    justify-content: space-between;
    height: 29px;
    font-size: 14px;
    border-bottom: 1px solid #eee;
}
.fh svg {
    width: 9px;
    height: 10px;
    color: #3fbf95;
}
.fg {
    height: 72px;
    padding-top: 10px;
    border-bottom: 1px solid #eee;
}
.fg label {
    display: flex;
    align-items: center;
    justify-content: space-between;
    height: 20px;
    font-size: 11.500px;
}
.fg label svg {
    width: 11px;
    height: 11px;
}
.sel {
    display: flex;
    flex: none;
    align-items: center;
    width: 97px;
    height: 20px;
    padding: 0 6px;
    border: 1px solid #aacde6;
    background: #fff;
    font-size: 9.800px;
    color: #444;
}
.sel svg {
    width: 8px;
    height: 9px;
    margin-left: auto;
    color: #5b9fd8;
}
.sel u {
    margin-right: 3px;
    color: #4f94cc;
}
.fg .sel {
    width: 118px;
    height: 21px;
    margin-top: 8px;
}
.cal {
    width: 8px;
    height: 9px;
    margin-right: 8px;
    border: 1px solid #4f94cc;
    border-top-width: 3px;
}
.lt-panel {
    flex: none;
    width: 728px;
    padding: 11px 11px 0 12px;
}
.stats {
    display: flex;
    gap: 11px;
    height: 87px;
}
.stats > div {
    position: relative;
    width: 132.500px;
    height: 69px;
    padding: 4px 5px;
    border: 3px solid #86b0ee;
    border-radius: 4px;
    background: #eaf6fe;
}
.stats h4 {
    display: flex;
    align-items: center;
    justify-content: space-between;
    font-size: 10.300px;
    line-height: 17px;
    letter-spacing: -0.05px;
}
.stats h4 svg {
    width: 11px;
    height: 11px;
    color: #86b0ee;
}
.stats b {
    display: block;
    margin-top: 3px;
    font-size: 16.500px;
    font-weight: 400;
    line-height: 22px;
    letter-spacing: -0.6px;
}
.stats .big {
    position: absolute;
    right: 6px;
    bottom: 6px;
    width: 24px;
    height: 22px;
    color: #4788e6;
}
.blk {
    border-top: 1px solid #eff1f4;
}
.bh {
    display: flex;
    justify-content: space-between;
    height: 58px;
    padding-top: 17px;
}
.bh h3 {
    font-size: 14.400px;
    line-height: 20px;
}
.bh p {
    padding-top: 1px;
    font-size: 11.500px;
    line-height: 20px;
    color: #707070;
}
.bh .date {
    letter-spacing: -0.500px;
}
.tl {
    display: flex;
    gap: 6px;
    padding-top: 2px;
}
.tl s {
    width: 1px;
    height: 20px;
    margin: 0 7px 0 6px;
    background: #e8ebee;
}
.tl .bt {
    width: 61px;
    height: 20px;
    margin: 0;
    line-height: 19px;
}
.tl .w {
    width: 113px;
}
.rank {
    height: 127px;
}
.vals {
    display: flex;
    gap: 6.500px;
    overflow: hidden;
    padding-top: 8px;
}
.vals div {
    position: relative;
    flex: none;
    width: 130.500px;
    height: 41px;
    padding: 7px 6px;
    border: 1px solid #aacde6;
    border-radius: 4px;
    font-size: 9px;
    line-height: 12px;
}
.vals b {
    position: absolute;
    right: 13px;
    top: 11px;
    font-size: 12px;
    line-height: 18px;
    font-weight: 500;
    color: #4f94cc;
}
.geo {
    height: 501px;
}
.geo .bh {
    padding-top: 16px;
}
.note {
    display: flex;
    align-items: center;
    justify-content: center;
    height: 31px;
    font-size: 8.800px;
    letter-spacing: -0.1px;
    color: #555;
}
.note::before, .note::after {
    content: "";
    width: 94px;
    height: 1px;
    background: #eceff2;
    margin: 0 8px;
}
.note svg {
    width: 7px;
    height: 7px;
    margin-right: 7px;
}
.map {
    display: block;
}
.m1 text, .m2 text {
    text-anchor: middle;
    font-size: 10.500px;
    fill: #6f7375;
}
.m2 text {
    font-size: 8.500px;
    fill: #a3a7a9;
}
.cap {
    font-size: 10px;
    fill: #fff;
}
.cap tspan {
    font-size: 9px;
}
.tp {
    font-size: 10px;
    fill: #4a4a4a;
}
.tp.s {
    font-size: 9.500px;
}
.segm {
    position: relative;
    height: 148px;
}
.segm .stip {
    position: absolute;
    left: 322px;
    top: 21px;
    width: 156px;
    height: 26px;
    padding-left: 22px;
    border: 1.500px solid #555c6b;
    background: #f3f5fb;
    font-size: 10.700px;
    line-height: 23px;
}
.stip i {
    position: absolute;
    left: 6px;
    top: 8px;
    width: 8px;
    height: 8px;
    border-radius: 50%;
    background: #2a86e2;
}
.stip::after {
    content: "";
    position: absolute;
    left: 6px;
    top: 25px;
    border: 4px solid transparent;
    border-top: 8px solid #17202e;
    border-bottom: 0;
}
.sbar {
    display: grid;
    grid-template-columns: 169px 222px 190px 124px;
    height: 39px;
}
.sbar i {
    background: #15569c;
}
.sbar i:nth-child(2) {
    background: #0091ea;
}
.sbar i:nth-child(3) {
    background: #b388ff;
}
.sbar i:nth-child(4) {
    background: #ff8a80;
}
.slegend {
    display: flex;
    align-items: center;
    gap: 26px;
    height: 53px;
    font-size: 9.900px;
    color: #555;
}
.slegend i {
    display: inline-block;
    width: 8px;
    height: 8px;
    margin-right: 7px;
    border-radius: 50%;
}
.slegend em {
    margin-left: auto;
}
.signals {
    height: 353px;
}
.scap {
    height: 27px;
    padding-top: 1px;
    font-size: 9.700px;
    line-height: 32px;
    text-align: center;
    color: #555;
}
.scap b {
    font-size: 11.200px;
    font-weight: 400;
    color: #444;
}
.locs {
    display: block;
    border-bottom: 1px solid #eff1f4;
}
.tt {
    font-size: 9px;
    fill: #444;
}
.tt .l {
    font-size: 10.500px;
}
.tt .x {
    font-size: 8.500px;
    fill: #555;
}
.prime {
    height: 640px;
    border-bottom: 1px solid #eff1f4;
}
.showing {
    display: flex;
    align-items: center;
    gap: 8px;
    height: 37px;
    padding-top: 5px;
    font-size: 11px;
}
.showing span {
    width: 18px;
    height: 20px;
    border: 1px solid #eceff2;
    line-height: 18px;
    text-align: center;
}
.showing .off {
    margin-left: auto;
}
.showing .pg {
    width: 47px;
    border-color: #aacde6;
}
.showing .nx {
    border-color: #90c3e8;
    background: #e3f2fd;
    margin-left: -1px;
}
.pt {
    font-size: 8px;
    fill: #666;
    text-anchor: middle;
}
.pd {
    font-size: 10.700px;
    fill: #444;
    letter-spacing: -0.1px;
}
.scrolled .lt-body {
    flex: none;
    height: 1174.500px;
}
.scrolled .lt-panel {
    padding-top: 21px;
    width: 730px;
}
.scrolled .lt-filters {
    width: 132px;
}
.foot {
    height: 60px;
    margin-left: 12px;
    padding-top: 59px;
}
.foot i {
    display: block;
    width: 147px;
    height: 11px;
    border-radius: 5px;
    background: linear-gradient(90deg, #eceef0, #f7f8fa, #f0f1f3);
}
.rail-end {
    margin-top: auto;
    height: 83px;
    width: 28px;
    border-top: 1px solid #1a3552;
    padding: 12px 6px;
}
.rail-end i {
    display: block;
    width: 16px;
    height: 16px;
    margin-bottom: 25px;
    border: 5px solid #14b89b;
    border-radius: 50%;
    background: #3fc9b3;
}
```
FILE: charts.js
```js
function put(id, html) {
    document.getElementById(id).innerHTML = html;
}

// donut slices, percent of the circle
var parts = [[20, '#0091ea'], [10, '#7c4dff'], [15, '#00bfa5'], [15, '#00b8d4'], [20, '#ff8a80'], [20, '#15569c']];
var len = 2 * Math.PI * 106, done = 0, html = '';
parts.forEach(function (p) {
    html += '<circle cx="698.5" cy="715" r="106" stroke="' + p[1] + '" stroke-dasharray="' + (len * p[0] / 100) + ' ' + len +
        '" transform="rotate(' + (done * 3.6 - 90) + ' 698.5 715)"/>';
    done += p[0];
});
put('donut', html);

// dark bar chart axis
html = '';
for (var i = 0; i <= 10; i++) {
    var y = 1076.5 + i * 23.6;
    html += '<path d="M445 ' + y + 'H917" stroke="#264667" stroke-width="2"/><text class="ax" x="925" y="' + (y + 4) + '">' + (100 - i * 10) + ' %</text>';
}
put('dk-axis', html);

// axis for both sales charts
function salesAxis(top, bottom, labelY, phaseY, xs) {
    var months = ['Jan', 'Feb', 'Mar', 'Apr', 'May', 'Jun'], s = '<g class="lax">';
    for (var i = 0; i <= 10; i++) {
        var y = top + (bottom - top) * i / 10;
        s += '<path d="M1115 ' + y + 'H1934" stroke="#eaf0f4"/><text x="1086" y="' + (y + 3) + '">' + (100 - i * 10) + ' K</text>';
    }
    s += '<path d="M1115 ' + top + 'V' + bottom + 'M1934 ' + top + 'V' + bottom + '" stroke="#eaf0f4"/>';
    xs.forEach(function (x, i) {
        s += '<text class="c" x="' + x + '" y="' + (labelY + 3) + '">01 ' + months[i] + ' 2022</text>';
    });
    s += '</g><path d="M1115 ' + phaseY + 'h99M1287 ' + phaseY + 'h190M1571 ' + phaseY + 'h188M1836 ' + phaseY + 'h98" stroke="#cfe2f0" stroke-width="2"/>';
    s += '<path d="M1115 ' + (phaseY - 4) + 'v8M1388 ' + (phaseY - 4) + 'v8M1661 ' + (phaseY - 4) + 'v8M1934 ' + (phaseY - 4) + 'v8" stroke="#8b98a5"/>';
    s += '<g class="ph"><text x="1250" y="' + (phaseY + 3) + '">Pre Campaign</text><text x="1524" y="' + (phaseY + 3) + '">Campaign In-Flight</text><text x="1797" y="' + (phaseY + 3) + '">Post Campaign</text></g>';
    return s;
}
put('sales-axis', salesAxis(284, 479, 491, 507, [1140, 1293, 1446, 1599, 1753, 1907]) + '<path d="M1288 284V479" stroke="#d8d6e4" stroke-width="2"/>');
put('group-axis', salesAxis(1091, 1286, 1298, 1315, [1166, 1309, 1451, 1594, 1738, 1881]));

var lines = [
    ['gT', '#8d949c', 'M1115 295C1125 314 1145 324 1167 334C1210 354 1240 360 1288 360C1360 360 1380 338 1456 337C1560 334 1630 372 1676 388C1720 402 1780 408 1840 390C1880 378 1915 368 1934 360', [[1167, 334], [1288, 360], [1490, 339], [1762, 400]]],
    ['gS', '#ffb3ab', 'M1115 335C1128 352 1145 364 1167 373C1210 392 1240 400 1288 400C1360 398 1380 377 1456 377C1540 374 1580 390 1620 407C1660 425 1690 439 1746 439C1800 440 1850 428 1885 413C1905 407 1920 404 1934 399', [[1167, 373], [1288, 400], [1490, 379], [1746, 439]]],
    ['gP', '#c3b0fb', 'M1115 399C1170 422 1220 440 1288 440C1380 440 1430 410 1510 385C1560 374 1620 373 1670 387C1720 402 1780 402 1810 393C1840 388 1870 380 1895 368C1915 358 1928 347 1934 335', [[1288, 440], [1558, 378], [1789, 398], [1883, 373]]],
    ['gC', '#83cfdf', 'M1115 368C1125 378 1135 386 1147 395C1190 425 1230 460 1288 460C1370 460 1400 383 1472 383C1540 383 1550 423 1606 423C1660 423 1690 386 1762 385C1840 387 1890 417 1934 442', [[1147, 395], [1288, 460], [1441, 388], [1631, 420], [1740, 387], [1901, 423]]],
    ['gK', '#e6a3c9', 'M1115 442C1170 417 1210 386 1288 386C1360 386 1380 423 1440 424C1500 424 1510 384 1574 384C1660 384 1680 460 1762 460C1830 457 1890 410 1934 368', [[1143, 427], [1288, 386], [1416, 420], [1607, 389], [1774, 458], [1901, 396]]]
];
html = '';
lines.forEach(function (l) {
    html += '<path d="' + l[2] + 'V479H1115z" fill="url(#' + l[0] + ')"/><path d="' + l[2] + '" fill="none" stroke="' + l[1] + '" stroke-width="2"/>';
    l[3].forEach(function (c) {
        html += '<circle cx="' + c[0] + '" cy="' + c[1] + '" r="3" fill="' + l[1] + '" stroke="' + l[1] + '" stroke-width="1"/>';
    });
});
put('sales-lines', html);

// stacked bars: x, then y of violet, green, blue tops
html = '';
[[1152.5, 0, 0, 1267], [1296.5, 0, 0, 1248], [1439, 1150, 1189.5, 1247.5], [1582, 1111, 1162, 1236.5], [1726, 1150, 1189.5, 1247.5], [1873, 1189, 1217.5, 1258.5]].forEach(function (b) {
    if (b[1]) {
        html += '<rect x="' + b[0] + '" y="' + b[1] + '" width="25" height="60" fill="#b388ff"/>';
        html += '<rect x="' + b[0] + '" y="' + b[2] + '" width="25" height="' + (1286 - b[2]) + '" fill="#00bfa5"/>';
    }
    html += '<rect x="' + b[0] + '" y="' + b[3] + '" width="25" height="' + (1286 - b[3]) + '" fill="#0091ea"/>';
});
put('group-bars', html);

// location chart
var s = '<g class="lax">';
for (i = 0; i <= 10; i++) {
    y = 1729 + i * 19.55;
    s += '<path d="M1250 ' + y + 'H1935" stroke="#eaf2f4"/><text x="1230" y="' + (y + 3) + '">' + (100 - i * 10) + '</text>';
}
s += '<path d="M1250 1729V1924M1934 1729V1924" stroke="#eaf2f4"/>';
[[80, 20], [70, 20], [55, 25], [33, 10], [50, 30], [30, 20], [53, 15], [80, 50]].forEach(function (v, i) {
    var x = 1273 + i * 87;
    s += '<rect x="' + x + '" y="' + (1924.5 - v[0] * 1.955) + '" width="6" height="' + v[0] * 1.955 + '" fill="#27303d"/>';
    s += '<rect x="' + (x + 9.5) + '" y="' + (1924.5 - v[0] * 1.955) + '" width="18.5" height="' + v[0] * 1.955 + '" fill="#0091ea"/>';
    s += '<rect x="' + (x + 9.5) + '" y="' + (1924.5 - v[1] * 1.955) + '" width="18.5" height="' + v[1] * 1.955 + '" fill="#15569c"/>';
    s += '<text class="c" x="' + (x + 14) + '" y="' + (i == 3 ? 1943 : 1939) + '"' + (i == 1 ? ' style="fill:#4f94cc"' : '') + '>Location 0' + (i + 1) + '</text>';
});
s += '</g><path d="M1394 1808l6-4v8z" fill="#17202e"/><rect x="1401" y="1748" width="144" height="161" fill="#f3f5fb" stroke="#454c59" stroke-width="2"/>';
s += '<path d="M1408 1775h130M1408 1797h130M1408 1853h130" stroke="#e6e9f0"/>';
s += '<g class="tt"><text x="1407" y="1764">Location 02</text><circle cx="1411" cy="1786" r="4" fill="#1b2636"/><text x="1423" y="1789"><tspan class="l" style="font-size:9.5px">7000</tspan> <tspan class="x" style="font-size:8px">Total Market</tspan></text>';
s += '<circle cx="1411" cy="1812" r="4" fill="#2a86e2"/><text class="l" x="1423" y="1816">Male - 80%</text><text class="x" x="1407" y="1834">- 4000 Potential Customers</text><text class="x" x="1407" y="1845">- 2000 Actual Customers</text>';
s += '<circle cx="1411" cy="1867" r="4" fill="#2c5193"/><text class="l" x="1423" y="1871">Female - 20%</text><text class="x" x="1407" y="1889">- 2000 Potential Customers</text><text class="x" x="1407" y="1900">- 800 Actual Customers</text></g>';

var tpl = document.getElementById('tpl-insights');
document.querySelectorAll('.insights').forEach(function (el) {
    el.appendChild(tpl.content.cloneNode(true));
    el.querySelector('.locs').innerHTML = s;
});

// prime time bubbles: offset, radius
var a = [[0, 19], [24.5, 13], [118, 9.5], [132, 6], [195, 6.5], [211, 9.5], [234, 13], [270.5, 19], [296.5, 13], [314, 9.5], [327, 6]];
var b = [[0, 6], [13, 9.5], [30, 13], [57, 19], [93, 13], [116, 9.5], [131, 6], [195, 6], [208.5, 9.5], [302, 13], [326.5, 19]];
var days = [['01 Jan, Mon', a, 1516.6, '#15569c'], ['02 Jan, Tue', a, 1424.8, '#0091ea'], ['03 Jan, Wed', a, 1542, '#b388ff'], ['04 Jan, Thu', b, 1438, '#00bfa5'],
    ['05 Jan, Fri', b, 1516.6, '#00b8d4'], ['06 Jan, Sat', a, 1391.6, '#ff8a80'], ['07 Jan, Sun', b, 1503, '#ffa126']];
html = '';
days.forEach(function (d, i) {
    var y = 2137.5 + i * 75.1;
    html += '<path d="M1308 ' + y + 'H1934" stroke="#eceff2"/><text class="pd" x="1229.5" y="' + (y + 3.5) + '">' + d[0] + '</text>';
    ['12am', '04am', '08am', '12pm', '04pm', '08pm'].forEach(function (t, k) {
        html += '<text class="pt" x="' + [1318.5, 1412.5, 1508.5, 1603, 1698, 1794.5][k] + '" y="' + (y + 14.5) + '">' + t + '</text>';
    });
    d[1].forEach(function (c) {
        html += '<circle cx="' + (d[2] + c[0]) + '" cy="' + (y - 13) + '" r="' + c[1] + '" fill="' + d[3] + '" fill-opacity=".5"/>';
    });
});
html += '<rect x="1576" y="2314" width="136" height="79" fill="#f3f5fb" stroke="#6b7280" stroke-width="1.5"/><path d="M1582 2393h8l-4 8z" fill="#17202e"/><path d="M1582 2357h124" stroke="#e0e3ea"/>';
html += '<circle cx="1586" cy="2325.500" r="4" fill="#4fd0e0"/><g class="tt"><text x="1597" y="2329">10am - 11am</text><text x="1582" y="2348"><tspan>30%</tspan> Activity</text><text class="x" x="1582" y="2374">- 200 Potential Customers</text><text class="x" x="1582" y="2385">- 80 Actual Customers</text></g>';
put('prime', html);
```
